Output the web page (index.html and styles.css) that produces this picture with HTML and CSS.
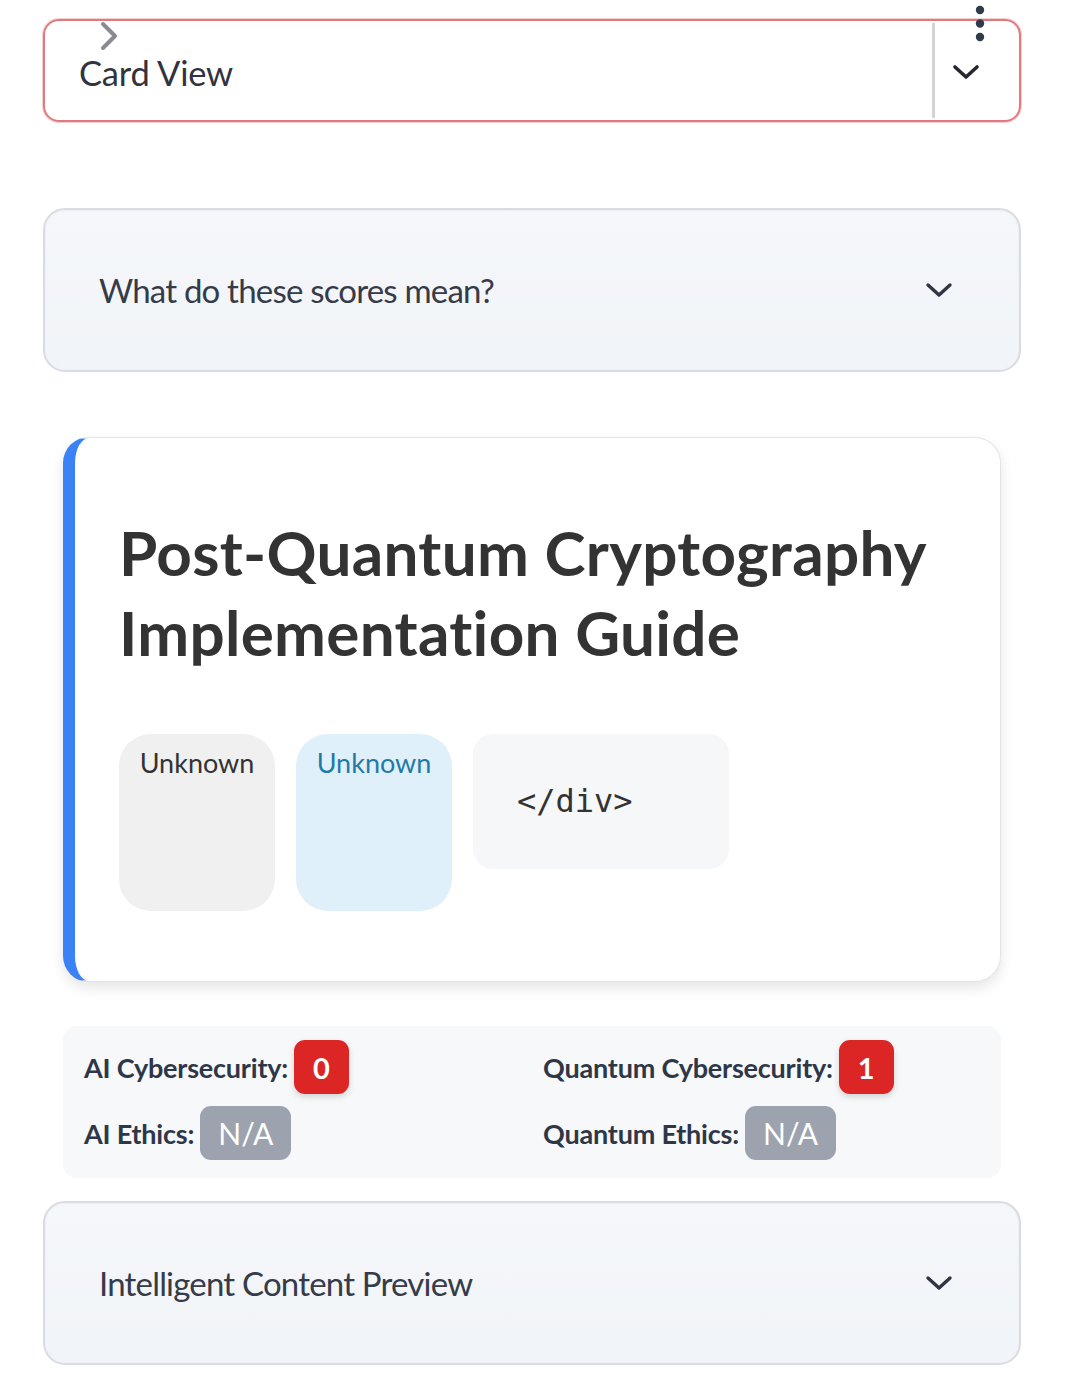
FILE: index.html
```html
<!DOCTYPE html>
<html lang="en">
<head>
<meta charset="utf-8">
<title>Card View</title>
<link rel="stylesheet" href="styles.css">
</head>
<body>
<main class="page">
  <div class="select">
    <svg class="peek-chevron" width="24" height="30" viewBox="0 0 24 30"><path d="M5 3 L17 15 L5 27" fill="none" stroke="#8a8b90" stroke-width="4" stroke-linecap="round" stroke-linejoin="round"/></svg>
    <div class="select-value">Card View</div>
    <div class="select-divider"></div>
    <div class="select-toggle">
      <svg width="28" height="18" viewBox="0 0 28 18"><path d="M3 4 L14 14 L25 4" fill="none" stroke="#262730" stroke-width="3.6" stroke-linecap="round" stroke-linejoin="round"/></svg>
    </div>
    <svg class="kebab" width="12" height="40" viewBox="0 0 12 40"><circle cx="6" cy="5" r="4.2" fill="#31394a"/><circle cx="6" cy="18.5" r="4.2" fill="#31394a"/><circle cx="6" cy="32" r="4.2" fill="#31394a"/></svg>
  </div>

  <details class="expander first">
    <summary>
      <span>What do these scores mean?</span>
      <svg width="28" height="18" viewBox="0 0 28 18"><path d="M3 4 L14 14 L25 4" fill="none" stroke="#2f3542" stroke-width="3.4" stroke-linecap="round" stroke-linejoin="round"/></svg>
    </summary>
  </details>

  <article class="card">
    <h2 class="card-title">Post-Quantum Cryptography Implementation Guide</h2>
    <div class="tags">
      <span class="pill pill-gray">Unknown</span>
      <span class="pill pill-blue">Unknown</span>
      <span class="code-box">&lt;/div&gt;</span>
    </div>
  </article>

  <section class="scores">
    <div class="score"><span class="score-label">AI Cybersecurity:</span><span class="badge badge-red">0</span></div>
    <div class="score"><span class="score-label">Quantum Cybersecurity:</span><span class="badge badge-red">1</span></div>
    <div class="score"><span class="score-label">AI Ethics:</span><span class="badge badge-gray">N/A</span></div>
    <div class="score"><span class="score-label">Quantum Ethics:</span><span class="badge badge-gray">N/A</span></div>
  </section>

  <details class="expander last">
    <summary>
      <span>Intelligent Content Preview</span>
      <svg width="28" height="18" viewBox="0 0 28 18"><path d="M3 4 L14 14 L25 4" fill="none" stroke="#2f3542" stroke-width="3.4" stroke-linecap="round" stroke-linejoin="round"/></svg>
    </summary>
  </details>
</main>
</body>
</html>
```

FILE: styles.css
```css
* { box-sizing: border-box; }
html, body { margin: 0; padding: 0; background: #ffffff; }
body {
  font-family: Lato, "Noto Sans", sans-serif;
  color: #31333f;
}
.page {
  padding: 19px 58px 0 43px;
  display: flex;
  flex-direction: column;
}

/* select box */
.select {
  position: relative;
  height: 103px;
  border: 2px solid #e07a7f;
  border-radius: 16px;
  display: flex;
  align-items: stretch;
  box-shadow: 0 0 0 1px rgba(224, 122, 127, 0.35);
}
.select-value {
  flex: 1;
  display: flex;
  align-items: flex-end;
  padding: 0 0 27px 34px;
  font-size: 34.5px;
  letter-spacing: -0.2px;
  color: #31333f;
}
.peek-chevron {
  position: absolute;
  left: 53px;
  top: 0;
}
.select-divider {
  width: 3px;
  margin: 2px 0;
  background: #d3d4d8;
}
.select-toggle {
  width: 84px;
  display: flex;
  align-items: center;
  justify-content: center;
  padding: 2px 22px 0 0;
}
.kebab {
  position: absolute;
  right: 33px;
  top: -16px;
}

/* expanders */
.expander {
  display: block;
  border: 2px solid #d9dde3;
  border-radius: 22px;
  background: linear-gradient(180deg, #f5f7fa 0%, #f1f4f8 100%);
  box-shadow: inset 0 0 0 1px #eef1f4;
}
.expander.first { margin-top: 86px; height: 164px; }
.expander.last { margin-top: 23px; height: 164px; }
.expander summary {
  list-style: none;
  height: 100%;
  min-height: 160px;
  display: flex;
  align-items: center;
  justify-content: space-between;
  padding: 0 66px 0 54px;
  font-size: 33px;
  letter-spacing: -0.8px;
  color: #353b48;
  cursor: pointer;
}
.expander summary::-webkit-details-marker { display: none; }

/* card */
.card {
  margin: 65px 20px 0 20px;
  background: #ffffff;
  border: 1px solid #e2e4e8;
  border-left: 12px solid #3b82f6;
  border-radius: 26px;
  padding: 74px 40px 70px 44px;
  box-shadow: 0 6px 14px rgba(0, 0, 0, 0.10);
}
.card-title {
  margin: 0;
  font-size: 62px;
  line-height: 80px;
  font-weight: 700;
  letter-spacing: 0.3px;
  color: #333333;
}
.tags {
  margin-top: 62px;
  display: flex;
  align-items: flex-start;
  gap: 21px;
}
.pill {
  width: 156px;
  height: 177px;
  border-radius: 32px;
  padding-top: 12px;
  text-align: center;
  font-size: 27px;
}
.pill-gray { background: #f0f0f0; color: #333333; }
.pill-blue { background: #dff0fb; color: #1f7aa8; }
.code-box {
  width: 256px;
  height: 135px;
  border-radius: 20px;
  background: #f6f7f9;
  padding: 48px 0 0 44px;
  font-family: "DejaVu Sans Mono", "Liberation Mono", monospace;
  font-size: 32px;
  color: #333333;
}

/* scores */
.scores {
  margin: 44px 20px 0 20px;
  height: 152px;
  background: #f7f8fa;
  border-radius: 14px;
  padding: 14px 21px;
  display: grid;
  grid-template-columns: 459px 1fr;
  align-content: start;
  row-gap: 12px;
}
.score {
  display: flex;
  align-items: center;
  gap: 6px;
}
.score-label {
  font-size: 27px;
  font-weight: 700;
  letter-spacing: -0.2px;
  color: #2d3748;
}
.badge {
  height: 54px;
  border-radius: 11px;
  display: inline-flex;
  align-items: center;
  justify-content: center;
  padding: 0 18px;
  color: #ffffff;
}
.badge-red {
  background: #dc2626;
  font-size: 29px;
  font-weight: 700;
  padding: 0 19px;
  box-shadow: 0 3px 6px rgba(0, 0, 0, 0.15);
}
.badge-gray {
  background: #9ca3af;
  font-size: 30px;
}
```
